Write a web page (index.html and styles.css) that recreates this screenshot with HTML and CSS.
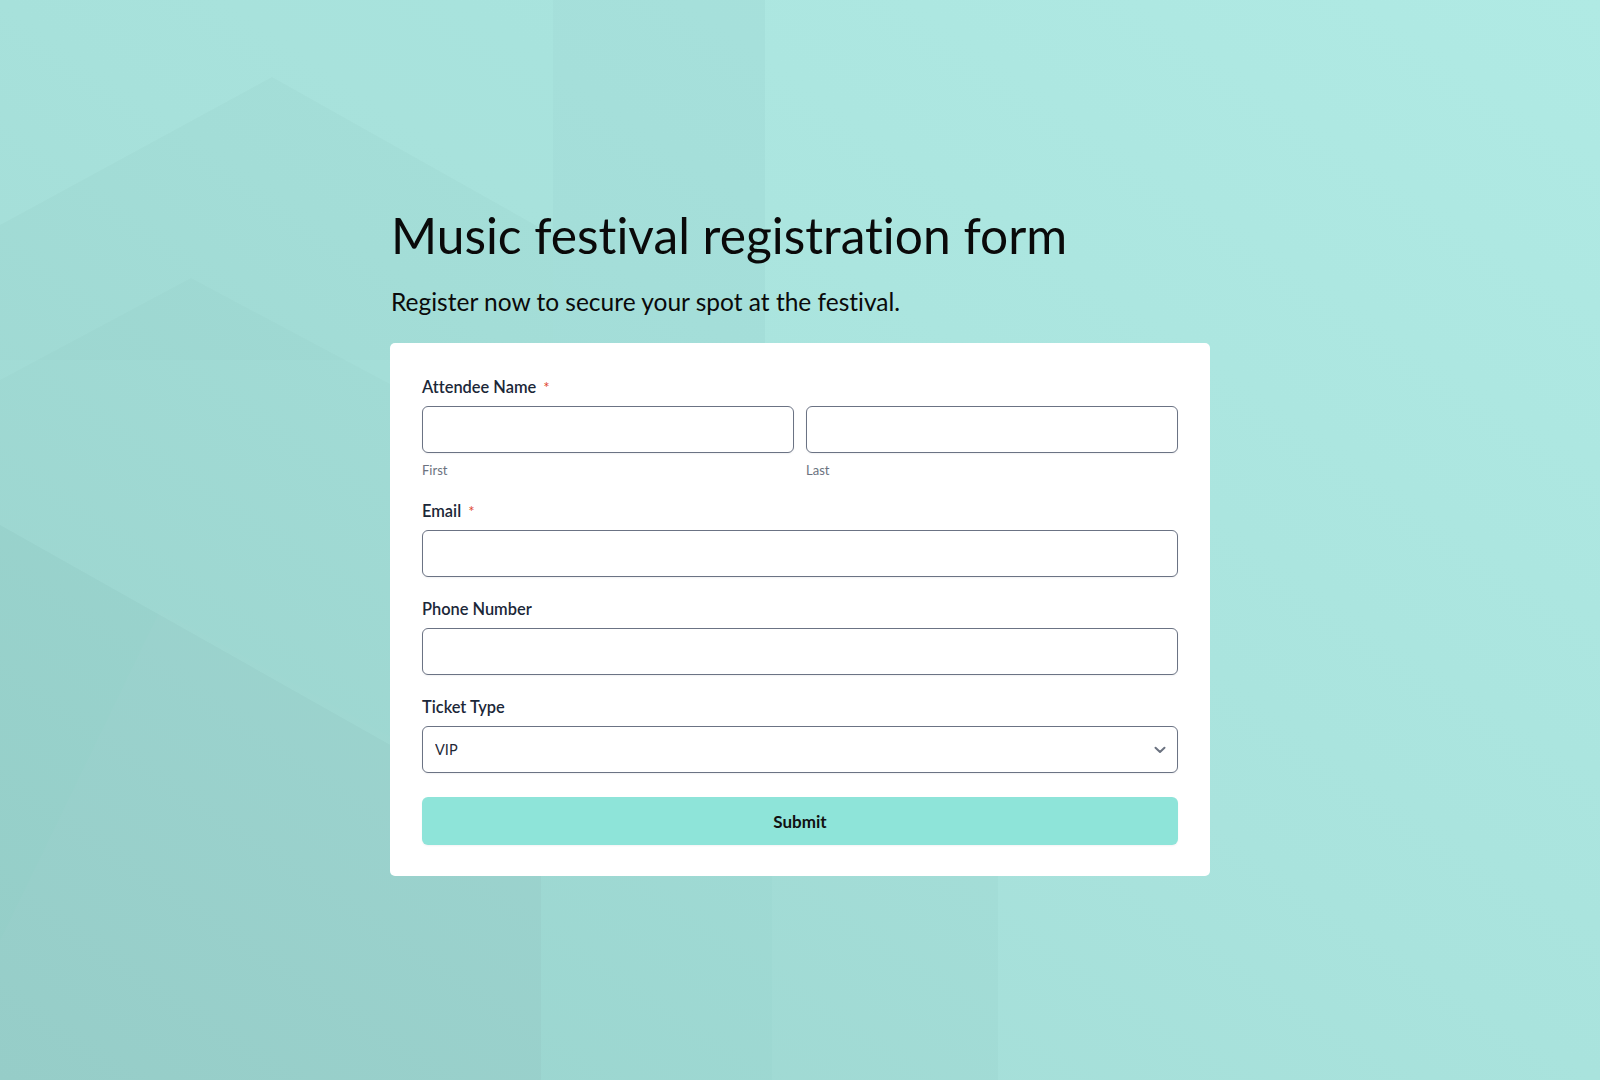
FILE: index.html
```html
<!DOCTYPE html>
<html lang="en">
<head>
<meta charset="utf-8">
<title>Music festival registration form</title>
<link rel="stylesheet" href="styles.css">
</head>
<body>
<svg class="backdrop" viewBox="0 0 1600 1080" preserveAspectRatio="none" aria-hidden="true">
  <defs>
    <linearGradient id="g" x1="1" y1="0" x2="0" y2="1">
      <stop offset="0" stop-color="#b0eae4"/>
      <stop offset="0.5" stop-color="#a9e3dd"/>
      <stop offset="1" stop-color="#a0d9d3"/>
    </linearGradient>
  </defs>
  <rect width="1600" height="1080" fill="url(#g)"/>
  <rect x="0" y="0" width="553" height="360" fill="#004848" opacity="0.012"/>
  <rect x="553" y="0" width="212" height="360" fill="#004848" opacity="0.03"/>
  <polygon points="272,77 553,235 553,360 541,360 541,1080 0,1080 0,225" fill="#004848" opacity="0.018"/>
  <polygon points="191,278 420,400 541,470 541,1080 0,1080 0,380" fill="#004848" opacity="0.015"/>
  <polygon points="0,525 541,830 541,1080 0,1080" fill="#004848" opacity="0.03"/>
  <polygon points="0,940 160,610 541,820 541,1080 0,1080" fill="#ffffff" opacity="0.02"/>
  <rect x="541" y="870" width="231" height="210" fill="#004848" opacity="0.04"/>
  <rect x="772" y="870" width="226" height="210" fill="#004848" opacity="0.022"/>
</svg>
<main class="page">
  <h1 class="title">Music festival registration form</h1>
  <p class="subtitle">Register now to secure your spot at the festival.</p>
  <form class="card">
    <div class="field field-name">
      <label class="label">Attendee Name <span class="req">*</span></label>
      <div class="name-row">
        <div class="name-col">
          <input class="input" type="text">
          <span class="sublabel">First</span>
        </div>
        <div class="name-col">
          <input class="input" type="text">
          <span class="sublabel">Last</span>
        </div>
      </div>
    </div>
    <div class="field">
      <label class="label">Email <span class="req">*</span></label>
      <input class="input" type="email">
    </div>
    <div class="field">
      <label class="label">Phone Number</label>
      <input class="input" type="tel">
    </div>
    <div class="field">
      <label class="label">Ticket Type</label>
      <div class="select-wrap">
        <select class="input select">
          <option>VIP</option>
        </select>
        <svg class="chevron" width="12" height="8" viewBox="0 0 12 8" aria-hidden="true"><polyline points="1.5,1.8 6,6 10.5,1.8" fill="none" stroke="#6b7280" stroke-width="2" stroke-linecap="round" stroke-linejoin="round"/></svg>
      </div>
    </div>
    <button class="submit" type="button">Submit</button>
  </form>
</main>
</body>
</html>
```

FILE: styles.css
```css
html, body {
  margin: 0;
  padding: 0;
}
body {
  width: 1600px;
  height: 1080px;
  overflow: hidden;
  position: relative;
  background: #ace6e0;
  font-family: Lato, "Noto Sans", sans-serif;
  font-variant-ligatures: none;
}
.backdrop {
  position: absolute;
  left: 0;
  top: 0;
  width: 1600px;
  height: 1080px;
  z-index: 0;
}
.page {
  position: relative;
  z-index: 1;
  width: 820px;
  margin: 0 auto;
  padding-top: 205px;
}
.title {
  margin: 0;
  font-family: Lato, sans-serif;
  font-weight: 400;
  font-size: 49.7px;
  line-height: 60px;
  letter-spacing: 0;
  color: #0a0a0a;
  padding-left: 1px;
  font-variant-ligatures: none;
}
.subtitle {
  margin: 21px 0 0 0;
  font-family: Lato, sans-serif;
  font-size: 24.5px;
  line-height: 32px;
  letter-spacing: 0;
  color: #0a0a0a;
  padding-left: 1px;
}
.card {
  margin-top: 25px;
  background: #ffffff;
  border-radius: 5px;
  padding: 33px 32px 31px 32px;
  display: flex;
  flex-direction: column;
}
.field {
  display: flex;
  flex-direction: column;
  margin-bottom: 21px;
}
.field-name {
  margin-bottom: 21px;
}
.label {
  font-size: 16.4px;
  line-height: 22px;
  font-weight: 600;
  color: #1b2738;
  margin-bottom: 8px;
}
.req {
  color: #e0442c;
  font-size: 15px;
  font-weight: 400;
  margin-left: 3px;
  vertical-align: 0;
}
.name-row {
  display: grid;
  grid-template-columns: 1fr 1fr;
  column-gap: 12px;
}
.name-col {
  display: flex;
  flex-direction: column;
}
.input {
  box-sizing: border-box;
  height: 47px;
  width: 100%;
  border: 1px solid #6b7384;
  border-radius: 6px;
  background: #ffffff;
  box-shadow: 0 1px 2px rgba(16, 24, 40, 0.06);
  font-family: Lato, sans-serif;
  font-size: 14.5px;
  color: #1f2937;
  padding: 0 12px;
  margin: 0;
  outline: none;
}
.sublabel {
  margin-top: 8px;
  font-size: 13px;
  line-height: 18px;
  color: #6b7280;
}
.select-wrap {
  position: relative;
}
.select {
  appearance: none;
  -webkit-appearance: none;
  display: block;
}
.chevron {
  position: absolute;
  right: 12px;
  top: 20px;
}
.submit {
  margin-top: 3px;
  height: 48px;
  border: none;
  border-radius: 6px;
  background: #8ee4d9;
  font-family: Lato, sans-serif;
  font-size: 17px;
  font-weight: 700;
  color: #111111;
  box-shadow: 0 1px 2px rgba(16, 24, 40, 0.05);
}
```
